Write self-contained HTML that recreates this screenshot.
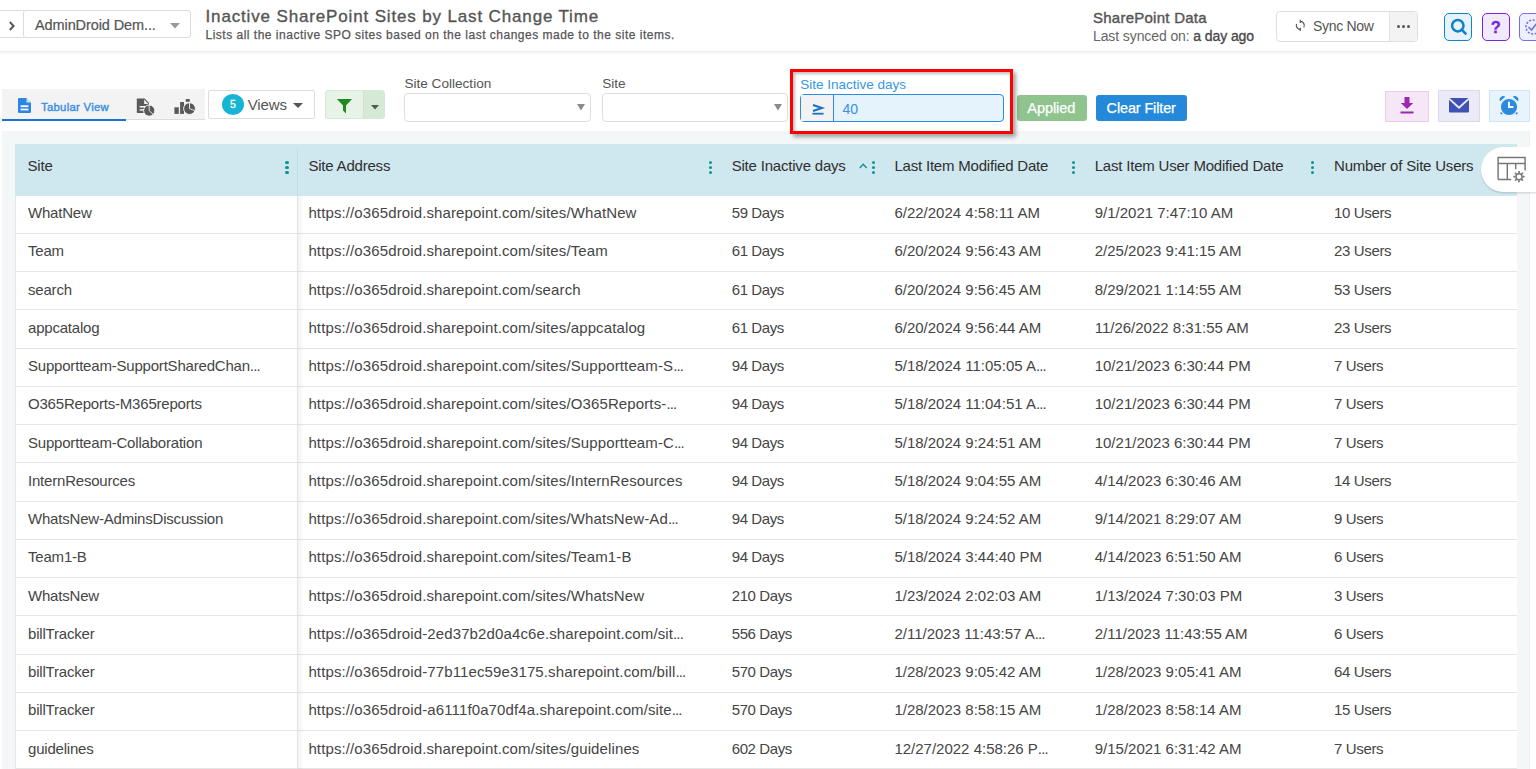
<!DOCTYPE html>
<html><head><meta charset="utf-8">
<style>
*{box-sizing:border-box;margin:0;padding:0}
html,body{width:1536px;height:769px;overflow:hidden;background:#fff;font-family:"Liberation Sans",sans-serif;color:#444}
.a{position:absolute}
.t{white-space:nowrap}
svg{position:absolute;overflow:visible}
</style></head><body>
<div class="a" style="left:0px;top:0px;width:1536px;height:51px;background:#fff"></div>
<div class="a" style="left:0px;top:51px;width:1536px;height:4px;background:linear-gradient(#efefef,#fafafa 60%,#fff)"></div>
<div class="a" style="left:-6px;top:10px;width:30px;height:28px;border:1px solid #dcdcdc;border-right:none;background:#fff"></div>
<svg style="left:8px;top:20px" width="8" height="12"><path d="M1.8 2 L5.6 6 L1.8 10" fill="none" stroke="#555" stroke-width="1.9"/></svg>
<div class="a" style="left:23px;top:10px;width:168px;height:28px;border:1px solid #dcdcdc;border-radius:3px;background:#fff"></div>
<div class="a t" style="left:35px;top:17.73px;font-size:14.5px;line-height:14.5px;color:#555;font-weight:400;letter-spacing:-0.1px;-webkit-text-stroke:0.2px #555;">AdminDroid Dem...</div>
<svg style="left:170px;top:23px" width="11" height="6"><path d="M0 0 L10 0 L5 5.5Z" fill="#999"/></svg>
<div class="a t" style="left:205.5px;top:7.91px;font-size:17px;line-height:17px;color:#555;font-weight:400;letter-spacing:0.85px;-webkit-text-stroke:0.35px #555;">Inactive SharePoint Sites by Last Change Time</div>
<div class="a t" style="left:205.5px;top:28.84px;font-size:12px;line-height:12px;color:#555;font-weight:400;letter-spacing:0.5px;-webkit-text-stroke:0.25px #555;">Lists all the inactive SPO sites based on the last changes made to the site items.</div>
<div class="a t" style="left:1093px;top:10.10px;font-size:15px;line-height:15px;color:#555;font-weight:400;letter-spacing:0.25px;-webkit-text-stroke:0.4px #555;">SharePoint Data</div>
<div class="a t" style="left:1093px;top:28.75px;font-size:14px;line-height:14px;color:#666;font-weight:400;letter-spacing:-0.1px;">Last synced on: <span style="color:#4a4a4a;-webkit-text-stroke:0.35px #4a4a4a">a day ago</span></div>
<div class="a" style="left:1276px;top:11px;width:142px;height:31px;border:1px solid #dedede;border-radius:4px;background:#fff;overflow:hidden"></div>
<div class="a" style="left:1389px;top:12px;width:28px;height:29px;background:#f3f3f3;border-left:1px solid #e2e2e2;border-radius:0 3px 3px 0"></div>
<svg style="left:1295px;top:20px" width="12" height="12" viewBox="0 0 12 12"><path d="M5.3 1.4 A4 4 0 0 1 8.76 7.4" fill="none" stroke="#555" stroke-width="1.15"/><path d="M1.54 4.03 A4 4 0 0 0 5.3 9.4" fill="none" stroke="#555" stroke-width="1.15"/><path d="M5.3 -0.3 V3.1 M5.3 7.7 V11.1" stroke="#555" stroke-width="1.15"/></svg>
<div class="a t" style="left:1313px;top:19.15px;font-size:14px;line-height:14px;color:#555;font-weight:400;letter-spacing:-0.3px;">Sync Now</div>
<div class="a" style="left:1396.5px;top:24.5px;width:3.0px;height:3.0px;border-radius:50%;background:#555"></div>
<div class="a" style="left:1401.5px;top:24.5px;width:3.0px;height:3.0px;border-radius:50%;background:#555"></div>
<div class="a" style="left:1406.5px;top:24.5px;width:3.0px;height:3.0px;border-radius:50%;background:#555"></div>
<div class="a" style="left:1444px;top:13px;width:28px;height:28px;border:1.5px solid #0b86d4;border-radius:5px;background:#e7f2fb"></div>
<svg style="left:1450px;top:18px" width="18" height="18" viewBox="0 0 18 18"><circle cx="7.8" cy="7.7" r="5.7" fill="none" stroke="#0b80cd" stroke-width="2.5"/><path d="M11.9 11.9 L15.6 15.6" stroke="#0b80cd" stroke-width="2.6" stroke-linecap="round"/></svg>
<div class="a" style="left:1482px;top:13px;width:28px;height:28px;border:1.5px solid #7b22e0;border-radius:5px;background:#f0eafb"></div>
<div class="a t" style="left:1490.8px;top:19.23px;font-size:16.5px;line-height:16.5px;color:#7b22e0;font-weight:700;letter-spacing:0px;-webkit-text-stroke:0.3px #7b22e0;">?</div>
<div class="a" style="left:1519px;top:13px;width:28px;height:28px;border:1.5px solid #6f6ff2;border-radius:5px;background:#eeeefc"></div>
<svg style="left:1524px;top:18px" width="14" height="18"><circle cx="9" cy="9" r="7" fill="none" stroke="#6b6bee" stroke-width="1.5" stroke-dasharray="2 1.6"/><path d="M4.5 9 L7.5 12 L13 5" fill="none" stroke="#6b6bee" stroke-width="1.5"/></svg>
<div class="a" style="left:2px;top:89px;width:203px;height:31px;background:#f3f3f3;border-bottom:1px solid #dcdcdc"></div>
<div class="a" style="left:2px;top:119px;width:124px;height:2px;background:#1a74d2"></div>
<svg style="left:18px;top:98px" width="13" height="15" viewBox="0 0 13 15"><path d="M1.2 0 H8.5 L13 4.5 V13.8 Q13 15 11.8 15 H1.2 Q0 15 0 13.8 V1.2 Q0 0 1.2 0Z" fill="#2a86e2"/><path d="M8.5 0 V4.5 H13Z" fill="#cfe3f7"/><rect x="2.6" y="7.3" width="7.8" height="1.8" fill="#fff"/><rect x="2.6" y="10.6" width="7.8" height="1.8" fill="#fff"/></svg>
<div class="a t" style="left:41px;top:102.33px;font-size:11.3px;line-height:11.3px;color:#3a8fe6;font-weight:400;letter-spacing:0.3px;-webkit-text-stroke:0.4px #3a8fe6;">Tabular View</div>
<svg style="left:136px;top:98px" width="20" height="19" viewBox="0 0 20 19"><path d="M1.6 0.4 H8.6 L12.9 4.7 V15 H1.6 Q0.8 15 0.8 14.2 V1.2 Q0.8 0.4 1.6 0.4Z" fill="#595959"/><path d="M8.2 1.6 V6 H12.4Z" fill="#f4f4f4"/><rect x="3.6" y="8" width="6" height="1.5" fill="#f4f4f4"/><rect x="3.6" y="11.2" width="5" height="1.5" fill="#f4f4f4"/><circle cx="13.2" cy="12.6" r="5.6" fill="#595959" stroke="#f4f4f4" stroke-width="1"/><path d="M13.2 7.2 V12.6 L17 16.3" fill="none" stroke="#f4f4f4" stroke-width="0.9"/></svg>
<svg style="left:174px;top:98px" width="22" height="17" viewBox="0 0 22 17"><rect x="0.4" y="9.3" width="4.4" height="6.6" fill="#595959"/><rect x="6.1" y="4" width="3.9" height="11.9" fill="#595959"/><rect x="11.8" y="1" width="3.9" height="2.8" fill="#595959"/><circle cx="15.5" cy="10.6" r="5.9" fill="#595959" stroke="#f4f4f4" stroke-width="1"/><path d="M15.5 4.7 V10.6 L20.6 12.6" fill="none" stroke="#f4f4f4" stroke-width="0.9"/></svg>
<div class="a" style="left:208px;top:90px;width:107px;height:29px;border:1px solid #dcdcdc;border-radius:2px;background:#fff"></div>
<div class="a" style="left:222px;top:94px;width:22px;height:21px;border-radius:50%;background:#17b5d5"></div>
<div class="a t" style="left:230px;top:99.31px;font-size:10.5px;line-height:10.5px;color:#fff;font-weight:400;letter-spacing:0px;-webkit-text-stroke:0.3px #fff;">5</div>
<div class="a t" style="left:247.7px;top:97.00px;font-size:15px;line-height:15px;color:#555;font-weight:400;letter-spacing:-0.1px;">Views</div>
<svg style="left:293px;top:103px" width="11" height="6"><path d="M0 0 L10 0 L5 5Z" fill="#555"/></svg>
<div class="a" style="left:325px;top:90px;width:60px;height:29px;border:1px solid #d6e8d6;border-radius:3px;background:#e7f3e7;overflow:hidden"></div>
<div class="a" style="left:363px;top:91px;width:21px;height:27px;background:#d4ead4;border-left:1px solid #cfe3cf"></div>
<svg style="left:337px;top:99px" width="16" height="15" viewBox="0 0 16 15"><path d="M0 0 H15 L9 6.5 V14.5 L6 11.5 V6.5Z" fill="#1f8b1f"/></svg>
<svg style="left:371px;top:104.5px" width="9" height="5"><path d="M0 0 L8 0 L4 4.5Z" fill="#555"/></svg>
<div class="a t" style="left:404.4px;top:77.39px;font-size:13.6px;line-height:13.6px;color:#555;font-weight:400;letter-spacing:0px;">Site Collection</div>
<div class="a" style="left:404px;top:93px;width:187px;height:29px;border:1px solid #dedede;border-radius:4px;background:#fff"></div>
<svg style="left:577px;top:104px" width="9" height="7"><path d="M0 0 L8 0 L4 6.6Z" fill="#8a8a8a"/></svg>
<div class="a t" style="left:602.2px;top:77.39px;font-size:13.6px;line-height:13.6px;color:#555;font-weight:400;letter-spacing:0px;">Site</div>
<div class="a" style="left:602px;top:93px;width:186px;height:29px;border:1px solid #dedede;border-radius:4px;background:#fff"></div>
<svg style="left:774px;top:104px" width="9" height="7"><path d="M0 0 L8 0 L4 6.6Z" fill="#8a8a8a"/></svg>
<div class="a" style="left:790px;top:69px;width:223px;height:65px;z-index:5;border:3px solid #ff0000;box-shadow:3px 3px 4px rgba(0,0,0,0.35), inset 2px 2px 3px rgba(0,0,0,0.25);background:#fff"></div>
<div class="a t" style="left:800.3px;top:78.47px;font-size:13.5px;line-height:13.5px;color:#3599e2;font-weight:400;letter-spacing:0px;z-index:6;">Site Inactive days</div>
<div class="a" style="left:800px;top:94px;width:204px;height:28px;z-index:6;border:1px solid #2b8be2;border-radius:4px;background:#e4f3fc;overflow:hidden"></div>
<div class="a" style="left:801px;top:95px;width:33px;height:26px;z-index:7;background:#f2f2f2;border-right:1px solid #2b8be2"></div>
<svg style="z-index:8;left:812px;top:104px" width="12" height="11" viewBox="0 0 12 11"><path d="M1 1 L10 4 L1 7" fill="none" stroke="#1c70c4" stroke-width="2"/><rect x="0.5" y="8.8" width="11" height="1.8" fill="#1c70c4"/></svg>
<div class="a t" style="left:842.4px;top:102.05px;font-size:14px;line-height:14px;color:#3b8ee2;font-weight:400;letter-spacing:0px;z-index:8;">40</div>
<div class="a" style="left:1017px;top:95px;width:70px;height:26px;background:#8fc48f;border-radius:3px"></div>
<div class="a t" style="left:1027.3px;top:100.64px;font-size:14.6px;line-height:14.6px;color:#fff;font-weight:400;letter-spacing:-0.1px;-webkit-text-stroke:0.25px #fff;">Applied</div>
<div class="a" style="left:1096px;top:95px;width:91px;height:26px;background:#2589da;border-radius:3px"></div>
<div class="a t" style="left:1106.6px;top:100.61px;font-size:14.4px;line-height:14.4px;color:#fff;font-weight:400;letter-spacing:-0.1px;-webkit-text-stroke:0.25px #fff;">Clear Filter</div>
<div class="a" style="left:1385px;top:91px;width:44px;height:31px;background:#f5e7f6;border:1px solid #eacdeb"></div>
<svg style="left:1400px;top:96.5px" width="14" height="17" viewBox="0 0 14 17"><path d="M4.5 0 H9.5 V6 H13.2 L7 12 L0.8 6 H4.5Z" fill="#9c27b0"/><rect x="0.5" y="14.5" width="13" height="2" fill="#9c27b0"/></svg>
<div class="a" style="left:1438px;top:90px;width:42px;height:32px;background:#ebebf7;border:1px solid #d9d9ef"></div>
<svg style="left:1449px;top:97.5px" width="20" height="15" viewBox="0 0 20 15"><rect x="0" y="0" width="20" height="14.5" rx="1" fill="#3f51b5"/><path d="M0 0.6 L10 9.6 L20 0.6" fill="none" stroke="#ebebf7" stroke-width="1.9"/></svg>
<div class="a" style="left:1489px;top:90px;width:41px;height:32px;background:#e8f3fc;border:1px solid #cfe5f8"></div>
<svg style="left:1499px;top:96px" width="20" height="20" viewBox="0 0 20 20"><path d="M1.1 5.3 A3.5 3.5 0 0 1 6.3 0.8Z" fill="#2a8ae0"/><path d="M18.9 5.3 A3.5 3.5 0 0 0 13.7 0.8Z" fill="#2a8ae0"/><path d="M2.6 17.2 L4.6 15.2 M17.4 17.2 L15.4 15.2" stroke="#2a8ae0" stroke-width="2.6" stroke-linecap="round"/><circle cx="10" cy="11" r="8.7" fill="#2a8ae0" stroke="#e8f3fc" stroke-width="1.3"/><path d="M10 5.8 V11.1 H14.4" fill="none" stroke="#fff" stroke-width="2"/></svg>
<div class="a" style="left:2px;top:131px;width:1528px;height:669px;background:#f3f7f8;border-right:1px solid #eef0f1"></div>
<div class="a" style="left:15px;top:144px;width:1502px;height:51.599999999999994px;background:#cfe7ee"></div>
<div class="a t" style="left:27.5px;top:158.10px;font-size:15px;line-height:15px;color:#2f2f2f;font-weight:400;letter-spacing:-0.2px;">Site</div>
<div class="a" style="left:285.3px;top:160.9px;width:3.3999999999999773px;height:3.4000000000000057px;border-radius:50%;background:#0e9393"></div>
<div class="a" style="left:285.3px;top:165.75px;width:3.3999999999999773px;height:3.4000000000000057px;border-radius:50%;background:#0e9393"></div>
<div class="a" style="left:285.3px;top:170.6px;width:3.3999999999999773px;height:3.4000000000000057px;border-radius:50%;background:#0e9393"></div>
<div class="a t" style="left:308.4px;top:158.10px;font-size:15px;line-height:15px;color:#2f2f2f;font-weight:400;letter-spacing:-0.2px;">Site Address</div>
<div class="a" style="left:708.8px;top:160.9px;width:3.400000000000091px;height:3.4000000000000057px;border-radius:50%;background:#0e9393"></div>
<div class="a" style="left:708.8px;top:165.75px;width:3.400000000000091px;height:3.4000000000000057px;border-radius:50%;background:#0e9393"></div>
<div class="a" style="left:708.8px;top:170.6px;width:3.400000000000091px;height:3.4000000000000057px;border-radius:50%;background:#0e9393"></div>
<div class="a t" style="left:731.7px;top:158.10px;font-size:15px;line-height:15px;color:#2f2f2f;font-weight:400;letter-spacing:-0.2px;">Site Inactive days</div>
<div class="a" style="left:871.5px;top:160.9px;width:3.400000000000091px;height:3.4000000000000057px;border-radius:50%;background:#0e9393"></div>
<div class="a" style="left:871.5px;top:165.75px;width:3.400000000000091px;height:3.4000000000000057px;border-radius:50%;background:#0e9393"></div>
<div class="a" style="left:871.5px;top:170.6px;width:3.400000000000091px;height:3.4000000000000057px;border-radius:50%;background:#0e9393"></div>
<div class="a t" style="left:894.4px;top:158.10px;font-size:15px;line-height:15px;color:#2f2f2f;font-weight:400;letter-spacing:-0.2px;">Last Item Modified Date</div>
<div class="a" style="left:1071.5px;top:160.9px;width:3.400000000000091px;height:3.4000000000000057px;border-radius:50%;background:#0e9393"></div>
<div class="a" style="left:1071.5px;top:165.75px;width:3.400000000000091px;height:3.4000000000000057px;border-radius:50%;background:#0e9393"></div>
<div class="a" style="left:1071.5px;top:170.6px;width:3.400000000000091px;height:3.4000000000000057px;border-radius:50%;background:#0e9393"></div>
<div class="a t" style="left:1094.7px;top:158.10px;font-size:15px;line-height:15px;color:#2f2f2f;font-weight:400;letter-spacing:-0.2px;">Last Item User Modified Date</div>
<div class="a" style="left:1310.8px;top:160.9px;width:3.400000000000091px;height:3.4000000000000057px;border-radius:50%;background:#0e9393"></div>
<div class="a" style="left:1310.8px;top:165.75px;width:3.400000000000091px;height:3.4000000000000057px;border-radius:50%;background:#0e9393"></div>
<div class="a" style="left:1310.8px;top:170.6px;width:3.400000000000091px;height:3.4000000000000057px;border-radius:50%;background:#0e9393"></div>
<div class="a t" style="left:1334px;top:158.10px;font-size:15px;line-height:15px;color:#2f2f2f;font-weight:400;letter-spacing:-0.2px;">Number of Site Users</div>
<svg style="left:859px;top:162.5px" width="9" height="6"><path d="M0.7 5 L4.2 1.2 L7.7 5" fill="none" stroke="#0e9393" stroke-width="1.4"/></svg>
<div class="a" style="left:15px;top:195.6px;width:1502px;height:604.4px;background:#fff;border-left:1px solid #e6e6e6"></div>
<div class="a" style="left:16px;top:232.85px;width:1501px;height:1.0px;background:#e5e5e5"></div>
<div class="a t" style="left:28px;top:205.00px;font-size:15px;line-height:15px;color:#454545;font-weight:400;letter-spacing:-0.2px;">WhatNew</div>
<div class="a t" style="left:308.4px;top:205.00px;font-size:15px;line-height:15px;color:#454545;font-weight:400;letter-spacing:0.12px;">https://o365droid.sharepoint.com/sites/WhatNew</div>
<div class="a t" style="left:731.7px;top:205.00px;font-size:15px;line-height:15px;color:#454545;font-weight:400;letter-spacing:-0.4px;">59 Days</div>
<div class="a t" style="left:894.4px;top:205.00px;font-size:15px;line-height:15px;color:#454545;font-weight:400;letter-spacing:0px;">6/22/2024 4:58:11 AM</div>
<div class="a t" style="left:1094.7px;top:205.00px;font-size:15px;line-height:15px;color:#454545;font-weight:400;letter-spacing:0px;">9/1/2021 7:47:10 AM</div>
<div class="a t" style="left:1334px;top:205.00px;font-size:15px;line-height:15px;color:#454545;font-weight:400;letter-spacing:-0.35px;">10 Users</div>
<div class="a" style="left:16px;top:271.1px;width:1501px;height:1.0px;background:#e5e5e5"></div>
<div class="a t" style="left:28px;top:243.25px;font-size:15px;line-height:15px;color:#454545;font-weight:400;letter-spacing:-0.2px;">Team</div>
<div class="a t" style="left:308.4px;top:243.25px;font-size:15px;line-height:15px;color:#454545;font-weight:400;letter-spacing:0.12px;">https://o365droid.sharepoint.com/sites/Team</div>
<div class="a t" style="left:731.7px;top:243.25px;font-size:15px;line-height:15px;color:#454545;font-weight:400;letter-spacing:-0.4px;">61 Days</div>
<div class="a t" style="left:894.4px;top:243.25px;font-size:15px;line-height:15px;color:#454545;font-weight:400;letter-spacing:0px;">6/20/2024 9:56:43 AM</div>
<div class="a t" style="left:1094.7px;top:243.25px;font-size:15px;line-height:15px;color:#454545;font-weight:400;letter-spacing:0px;">2/25/2023 9:41:15 AM</div>
<div class="a t" style="left:1334px;top:243.25px;font-size:15px;line-height:15px;color:#454545;font-weight:400;letter-spacing:-0.35px;">23 Users</div>
<div class="a" style="left:16px;top:309.35px;width:1501px;height:1.0px;background:#e5e5e5"></div>
<div class="a t" style="left:28px;top:281.50px;font-size:15px;line-height:15px;color:#454545;font-weight:400;letter-spacing:-0.2px;">search</div>
<div class="a t" style="left:308.4px;top:281.50px;font-size:15px;line-height:15px;color:#454545;font-weight:400;letter-spacing:0.12px;">https://o365droid.sharepoint.com/search</div>
<div class="a t" style="left:731.7px;top:281.50px;font-size:15px;line-height:15px;color:#454545;font-weight:400;letter-spacing:-0.4px;">61 Days</div>
<div class="a t" style="left:894.4px;top:281.50px;font-size:15px;line-height:15px;color:#454545;font-weight:400;letter-spacing:0px;">6/20/2024 9:56:45 AM</div>
<div class="a t" style="left:1094.7px;top:281.50px;font-size:15px;line-height:15px;color:#454545;font-weight:400;letter-spacing:0px;">8/29/2021 1:14:55 AM</div>
<div class="a t" style="left:1334px;top:281.50px;font-size:15px;line-height:15px;color:#454545;font-weight:400;letter-spacing:-0.35px;">53 Users</div>
<div class="a" style="left:16px;top:347.6px;width:1501px;height:1.0px;background:#e5e5e5"></div>
<div class="a t" style="left:28px;top:319.75px;font-size:15px;line-height:15px;color:#454545;font-weight:400;letter-spacing:-0.2px;">appcatalog</div>
<div class="a t" style="left:308.4px;top:319.75px;font-size:15px;line-height:15px;color:#454545;font-weight:400;letter-spacing:0.12px;">https://o365droid.sharepoint.com/sites/appcatalog</div>
<div class="a t" style="left:731.7px;top:319.75px;font-size:15px;line-height:15px;color:#454545;font-weight:400;letter-spacing:-0.4px;">61 Days</div>
<div class="a t" style="left:894.4px;top:319.75px;font-size:15px;line-height:15px;color:#454545;font-weight:400;letter-spacing:0px;">6/20/2024 9:56:44 AM</div>
<div class="a t" style="left:1094.7px;top:319.75px;font-size:15px;line-height:15px;color:#454545;font-weight:400;letter-spacing:0px;">11/26/2022 8:31:55 AM</div>
<div class="a t" style="left:1334px;top:319.75px;font-size:15px;line-height:15px;color:#454545;font-weight:400;letter-spacing:-0.35px;">23 Users</div>
<div class="a" style="left:16px;top:385.85px;width:1501px;height:1.0px;background:#e5e5e5"></div>
<div class="a t" style="left:28px;top:358.00px;font-size:15px;line-height:15px;color:#454545;font-weight:400;letter-spacing:-0.2px;">Supportteam-SupportSharedChan<span style="letter-spacing:-0.9px">...</span></div>
<div class="a t" style="left:308.4px;top:358.00px;font-size:15px;line-height:15px;color:#454545;font-weight:400;letter-spacing:0.12px;">https://o365droid.sharepoint.com/sites/Supportteam-S<span style="letter-spacing:-0.9px">...</span></div>
<div class="a t" style="left:731.7px;top:358.00px;font-size:15px;line-height:15px;color:#454545;font-weight:400;letter-spacing:-0.4px;">94 Days</div>
<div class="a t" style="left:894.4px;top:358.00px;font-size:15px;line-height:15px;color:#454545;font-weight:400;letter-spacing:0px;">5/18/2024 11:05:05 A<span style="letter-spacing:-0.9px">...</span></div>
<div class="a t" style="left:1094.7px;top:358.00px;font-size:15px;line-height:15px;color:#454545;font-weight:400;letter-spacing:0px;">10/21/2023 6:30:44 PM</div>
<div class="a t" style="left:1334px;top:358.00px;font-size:15px;line-height:15px;color:#454545;font-weight:400;letter-spacing:-0.35px;">7 Users</div>
<div class="a" style="left:16px;top:424.1px;width:1501px;height:1.0px;background:#e5e5e5"></div>
<div class="a t" style="left:28px;top:396.25px;font-size:15px;line-height:15px;color:#454545;font-weight:400;letter-spacing:-0.2px;">O365Reports-M365reports</div>
<div class="a t" style="left:308.4px;top:396.25px;font-size:15px;line-height:15px;color:#454545;font-weight:400;letter-spacing:0.12px;">https://o365droid.sharepoint.com/sites/O365Reports-<span style="letter-spacing:-0.9px">...</span></div>
<div class="a t" style="left:731.7px;top:396.25px;font-size:15px;line-height:15px;color:#454545;font-weight:400;letter-spacing:-0.4px;">94 Days</div>
<div class="a t" style="left:894.4px;top:396.25px;font-size:15px;line-height:15px;color:#454545;font-weight:400;letter-spacing:0px;">5/18/2024 11:04:51 A<span style="letter-spacing:-0.9px">...</span></div>
<div class="a t" style="left:1094.7px;top:396.25px;font-size:15px;line-height:15px;color:#454545;font-weight:400;letter-spacing:0px;">10/21/2023 6:30:44 PM</div>
<div class="a t" style="left:1334px;top:396.25px;font-size:15px;line-height:15px;color:#454545;font-weight:400;letter-spacing:-0.35px;">7 Users</div>
<div class="a" style="left:16px;top:462.35px;width:1501px;height:1.0px;background:#e5e5e5"></div>
<div class="a t" style="left:28px;top:434.50px;font-size:15px;line-height:15px;color:#454545;font-weight:400;letter-spacing:-0.2px;">Supportteam-Collaboration</div>
<div class="a t" style="left:308.4px;top:434.50px;font-size:15px;line-height:15px;color:#454545;font-weight:400;letter-spacing:0.12px;">https://o365droid.sharepoint.com/sites/Supportteam-C<span style="letter-spacing:-0.9px">...</span></div>
<div class="a t" style="left:731.7px;top:434.50px;font-size:15px;line-height:15px;color:#454545;font-weight:400;letter-spacing:-0.4px;">94 Days</div>
<div class="a t" style="left:894.4px;top:434.50px;font-size:15px;line-height:15px;color:#454545;font-weight:400;letter-spacing:0px;">5/18/2024 9:24:51 AM</div>
<div class="a t" style="left:1094.7px;top:434.50px;font-size:15px;line-height:15px;color:#454545;font-weight:400;letter-spacing:0px;">10/21/2023 6:30:44 PM</div>
<div class="a t" style="left:1334px;top:434.50px;font-size:15px;line-height:15px;color:#454545;font-weight:400;letter-spacing:-0.35px;">7 Users</div>
<div class="a" style="left:16px;top:500.6px;width:1501px;height:1.0px;background:#e5e5e5"></div>
<div class="a t" style="left:28px;top:472.75px;font-size:15px;line-height:15px;color:#454545;font-weight:400;letter-spacing:-0.2px;">InternResources</div>
<div class="a t" style="left:308.4px;top:472.75px;font-size:15px;line-height:15px;color:#454545;font-weight:400;letter-spacing:0.12px;">https://o365droid.sharepoint.com/sites/InternResources</div>
<div class="a t" style="left:731.7px;top:472.75px;font-size:15px;line-height:15px;color:#454545;font-weight:400;letter-spacing:-0.4px;">94 Days</div>
<div class="a t" style="left:894.4px;top:472.75px;font-size:15px;line-height:15px;color:#454545;font-weight:400;letter-spacing:0px;">5/18/2024 9:04:55 AM</div>
<div class="a t" style="left:1094.7px;top:472.75px;font-size:15px;line-height:15px;color:#454545;font-weight:400;letter-spacing:0px;">4/14/2023 6:30:46 AM</div>
<div class="a t" style="left:1334px;top:472.75px;font-size:15px;line-height:15px;color:#454545;font-weight:400;letter-spacing:-0.35px;">14 Users</div>
<div class="a" style="left:16px;top:538.85px;width:1501px;height:1.0px;background:#e5e5e5"></div>
<div class="a t" style="left:28px;top:511.00px;font-size:15px;line-height:15px;color:#454545;font-weight:400;letter-spacing:-0.2px;">WhatsNew-AdminsDiscussion</div>
<div class="a t" style="left:308.4px;top:511.00px;font-size:15px;line-height:15px;color:#454545;font-weight:400;letter-spacing:0.12px;">https://o365droid.sharepoint.com/sites/WhatsNew-Ad<span style="letter-spacing:-0.9px">...</span></div>
<div class="a t" style="left:731.7px;top:511.00px;font-size:15px;line-height:15px;color:#454545;font-weight:400;letter-spacing:-0.4px;">94 Days</div>
<div class="a t" style="left:894.4px;top:511.00px;font-size:15px;line-height:15px;color:#454545;font-weight:400;letter-spacing:0px;">5/18/2024 9:24:52 AM</div>
<div class="a t" style="left:1094.7px;top:511.00px;font-size:15px;line-height:15px;color:#454545;font-weight:400;letter-spacing:0px;">9/14/2021 8:29:07 AM</div>
<div class="a t" style="left:1334px;top:511.00px;font-size:15px;line-height:15px;color:#454545;font-weight:400;letter-spacing:-0.35px;">9 Users</div>
<div class="a" style="left:16px;top:577.1px;width:1501px;height:1.0px;background:#e5e5e5"></div>
<div class="a t" style="left:28px;top:549.25px;font-size:15px;line-height:15px;color:#454545;font-weight:400;letter-spacing:-0.2px;">Team1-B</div>
<div class="a t" style="left:308.4px;top:549.25px;font-size:15px;line-height:15px;color:#454545;font-weight:400;letter-spacing:0.12px;">https://o365droid.sharepoint.com/sites/Team1-B</div>
<div class="a t" style="left:731.7px;top:549.25px;font-size:15px;line-height:15px;color:#454545;font-weight:400;letter-spacing:-0.4px;">94 Days</div>
<div class="a t" style="left:894.4px;top:549.25px;font-size:15px;line-height:15px;color:#454545;font-weight:400;letter-spacing:0px;">5/18/2024 3:44:40 PM</div>
<div class="a t" style="left:1094.7px;top:549.25px;font-size:15px;line-height:15px;color:#454545;font-weight:400;letter-spacing:0px;">4/14/2023 6:51:50 AM</div>
<div class="a t" style="left:1334px;top:549.25px;font-size:15px;line-height:15px;color:#454545;font-weight:400;letter-spacing:-0.35px;">6 Users</div>
<div class="a" style="left:16px;top:615.35px;width:1501px;height:1.0px;background:#e5e5e5"></div>
<div class="a t" style="left:28px;top:587.50px;font-size:15px;line-height:15px;color:#454545;font-weight:400;letter-spacing:-0.2px;">WhatsNew</div>
<div class="a t" style="left:308.4px;top:587.50px;font-size:15px;line-height:15px;color:#454545;font-weight:400;letter-spacing:0.12px;">https://o365droid.sharepoint.com/sites/WhatsNew</div>
<div class="a t" style="left:731.7px;top:587.50px;font-size:15px;line-height:15px;color:#454545;font-weight:400;letter-spacing:-0.4px;">210 Days</div>
<div class="a t" style="left:894.4px;top:587.50px;font-size:15px;line-height:15px;color:#454545;font-weight:400;letter-spacing:0px;">1/23/2024 2:02:03 AM</div>
<div class="a t" style="left:1094.7px;top:587.50px;font-size:15px;line-height:15px;color:#454545;font-weight:400;letter-spacing:0px;">1/13/2024 7:30:03 PM</div>
<div class="a t" style="left:1334px;top:587.50px;font-size:15px;line-height:15px;color:#454545;font-weight:400;letter-spacing:-0.35px;">3 Users</div>
<div class="a" style="left:16px;top:653.6px;width:1501px;height:1.0px;background:#e5e5e5"></div>
<div class="a t" style="left:28px;top:625.75px;font-size:15px;line-height:15px;color:#454545;font-weight:400;letter-spacing:-0.2px;">billTracker</div>
<div class="a t" style="left:308.4px;top:625.75px;font-size:15px;line-height:15px;color:#454545;font-weight:400;letter-spacing:0.12px;">https://o365droid-2ed37b2d0a4c6e.sharepoint.com/sit<span style="letter-spacing:-0.9px">...</span></div>
<div class="a t" style="left:731.7px;top:625.75px;font-size:15px;line-height:15px;color:#454545;font-weight:400;letter-spacing:-0.4px;">556 Days</div>
<div class="a t" style="left:894.4px;top:625.75px;font-size:15px;line-height:15px;color:#454545;font-weight:400;letter-spacing:0px;">2/11/2023 11:43:57 A<span style="letter-spacing:-0.9px">...</span></div>
<div class="a t" style="left:1094.7px;top:625.75px;font-size:15px;line-height:15px;color:#454545;font-weight:400;letter-spacing:0px;">2/11/2023 11:43:55 AM</div>
<div class="a t" style="left:1334px;top:625.75px;font-size:15px;line-height:15px;color:#454545;font-weight:400;letter-spacing:-0.35px;">6 Users</div>
<div class="a" style="left:16px;top:691.85px;width:1501px;height:1.0px;background:#e5e5e5"></div>
<div class="a t" style="left:28px;top:664.00px;font-size:15px;line-height:15px;color:#454545;font-weight:400;letter-spacing:-0.2px;">billTracker</div>
<div class="a t" style="left:308.4px;top:664.00px;font-size:15px;line-height:15px;color:#454545;font-weight:400;letter-spacing:0.12px;">https://o365droid-77b11ec59e3175.sharepoint.com/bill<span style="letter-spacing:-0.9px">...</span></div>
<div class="a t" style="left:731.7px;top:664.00px;font-size:15px;line-height:15px;color:#454545;font-weight:400;letter-spacing:-0.4px;">570 Days</div>
<div class="a t" style="left:894.4px;top:664.00px;font-size:15px;line-height:15px;color:#454545;font-weight:400;letter-spacing:0px;">1/28/2023 9:05:42 AM</div>
<div class="a t" style="left:1094.7px;top:664.00px;font-size:15px;line-height:15px;color:#454545;font-weight:400;letter-spacing:0px;">1/28/2023 9:05:41 AM</div>
<div class="a t" style="left:1334px;top:664.00px;font-size:15px;line-height:15px;color:#454545;font-weight:400;letter-spacing:-0.35px;">64 Users</div>
<div class="a" style="left:16px;top:730.1px;width:1501px;height:1.0px;background:#e5e5e5"></div>
<div class="a t" style="left:28px;top:702.25px;font-size:15px;line-height:15px;color:#454545;font-weight:400;letter-spacing:-0.2px;">billTracker</div>
<div class="a t" style="left:308.4px;top:702.25px;font-size:15px;line-height:15px;color:#454545;font-weight:400;letter-spacing:0.12px;">https://o365droid-a6111f0a70df4a.sharepoint.com/site<span style="letter-spacing:-0.9px">...</span></div>
<div class="a t" style="left:731.7px;top:702.25px;font-size:15px;line-height:15px;color:#454545;font-weight:400;letter-spacing:-0.4px;">570 Days</div>
<div class="a t" style="left:894.4px;top:702.25px;font-size:15px;line-height:15px;color:#454545;font-weight:400;letter-spacing:0px;">1/28/2023 8:58:15 AM</div>
<div class="a t" style="left:1094.7px;top:702.25px;font-size:15px;line-height:15px;color:#454545;font-weight:400;letter-spacing:0px;">1/28/2023 8:58:14 AM</div>
<div class="a t" style="left:1334px;top:702.25px;font-size:15px;line-height:15px;color:#454545;font-weight:400;letter-spacing:-0.35px;">15 Users</div>
<div class="a" style="left:16px;top:768.35px;width:1501px;height:1.0px;background:#e5e5e5"></div>
<div class="a t" style="left:28px;top:740.50px;font-size:15px;line-height:15px;color:#454545;font-weight:400;letter-spacing:-0.2px;">guidelines</div>
<div class="a t" style="left:308.4px;top:740.50px;font-size:15px;line-height:15px;color:#454545;font-weight:400;letter-spacing:0.12px;">https://o365droid.sharepoint.com/sites/guidelines</div>
<div class="a t" style="left:731.7px;top:740.50px;font-size:15px;line-height:15px;color:#454545;font-weight:400;letter-spacing:-0.4px;">602 Days</div>
<div class="a t" style="left:894.4px;top:740.50px;font-size:15px;line-height:15px;color:#454545;font-weight:400;letter-spacing:0px;">12/27/2022 4:58:26 P<span style="letter-spacing:-0.9px">...</span></div>
<div class="a t" style="left:1094.7px;top:740.50px;font-size:15px;line-height:15px;color:#454545;font-weight:400;letter-spacing:0px;">9/15/2021 6:31:42 AM</div>
<div class="a t" style="left:1334px;top:740.50px;font-size:15px;line-height:15px;color:#454545;font-weight:400;letter-spacing:-0.35px;">7 Users</div>
<div class="a" style="left:297px;top:148px;width:1px;height:47.599999999999994px;background:#c5dde4"></div>
<div class="a" style="left:297px;top:195.6px;width:1px;height:604.4px;background:#e2e2e2"></div>
<div class="a" style="left:298px;top:195.6px;width:6px;height:604.4px;background:linear-gradient(90deg,rgba(0,0,0,0.05),rgba(0,0,0,0))"></div>
<div class="a" style="left:1481.2px;top:147px;width:78.79999999999995px;height:44.5px;background:#fff;border-radius:22.5px 0 0 22.5px;box-shadow:0 1.5px 1.5px rgba(0,0,0,0.13)"></div>
<svg style="left:1497px;top:156px" width="30" height="28" viewBox="0 0 30 28"><path d="M1.1 23.4 V1.5 H28.1 V14.4 M1.1 23.4 H14.2 M1.1 7.4 H28.1 M10.3 7.4 V23.4 M18.7 7.4 V13.2" fill="none" stroke="#777" stroke-width="1.45"/><circle cx="22" cy="20.7" r="3" fill="#fff" stroke="#777" stroke-width="1.5"/><path d="M25.60 20.70 L27.60 20.70 M24.55 23.25 L25.96 24.66 M22.00 24.30 L22.00 26.30 M19.45 23.25 L18.04 24.66 M18.40 20.70 L16.40 20.70 M19.45 18.15 L18.04 16.74 M22.00 17.10 L22.00 15.10 M24.55 18.15 L25.96 16.74 " stroke="#777" stroke-width="1.7"/></svg>
</body></html>
